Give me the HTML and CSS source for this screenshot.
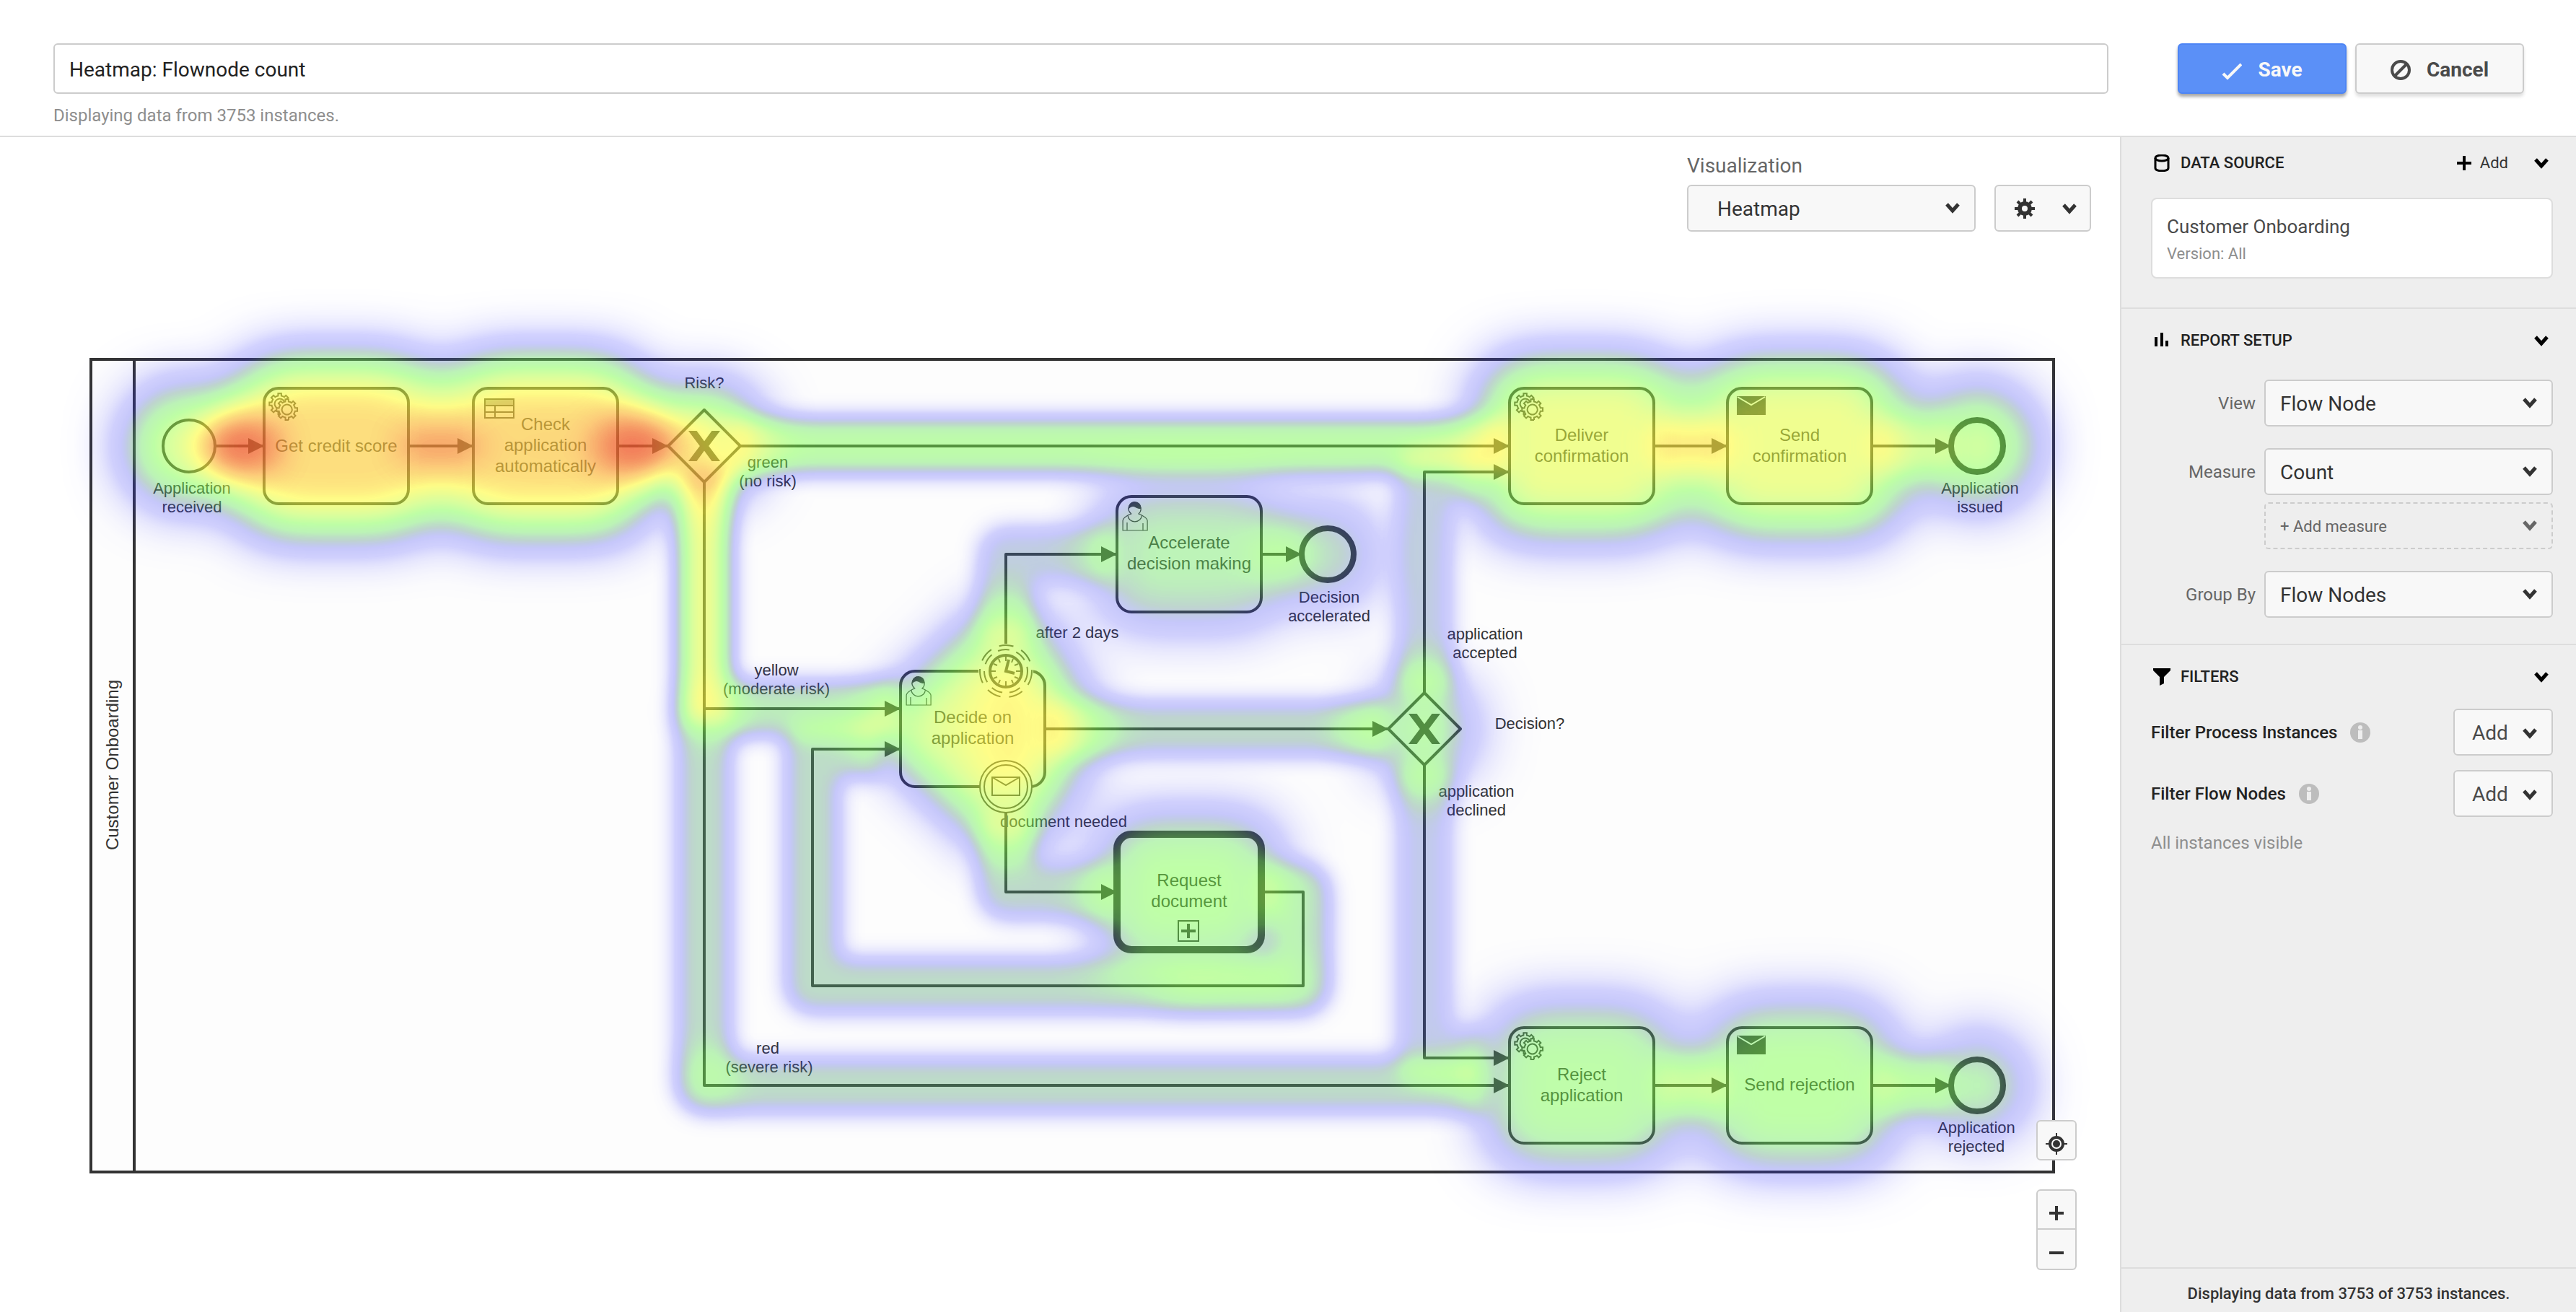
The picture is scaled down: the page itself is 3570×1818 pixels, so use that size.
FILE: index.html
```html
<!DOCTYPE html>
<html lang="en">
<head>
<meta charset="utf-8">
<title>Heatmap: Flownode count</title>
<link rel="stylesheet" href="styles.css">
</head>
<body>
<svg class="sprite" aria-hidden="true">
  <symbol id="chevron" viewBox="0 0 20 16"><path d="M2 3l8 9 8-9" fill="none" stroke="currentColor" stroke-width="5"/></symbol>
  <symbol id="info" viewBox="0 0 28 28"><circle cx="14" cy="14" r="14" fill="#bdbdbd"/><circle cx="14" cy="7" r="3" fill="#eee"/><path d="M11 11h6v12h-6z" fill="#eee"/></symbol>
</svg>

<header class="header">
  <div class="name">
    <input class="name-input" type="text" value="Heatmap: Flownode count" aria-label="Report name">
    <p class="name-info">Displaying data from 3753 instances.</p>
  </div>
  <div class="actions">
    <button class="button primary" type="button">
      <svg class="icon-action" viewBox="0 0 28 28" aria-hidden="true"><path d="M2 19l6 6L27 6" fill="none" stroke="currentColor" stroke-width="4"/></svg>Save
    </button>
    <button class="button" type="button">
      <svg class="icon-action" viewBox="0 0 28 28" aria-hidden="true"><g fill="none" stroke="currentColor" stroke-width="4"><circle cx="14" cy="14" r="12"/><path d="M6 22L22 6"/></g></svg>Cancel
    </button>
  </div>
</header>

<div class="content">
  <main class="report">
    <svg class="diagram" viewBox="0 190 2938 1628" role="img" aria-label="Customer Onboarding process heatmap">
      <defs>
        <marker id="arrow" viewBox="0 0 22 22" refX="22" refY="11" markerWidth="22" markerHeight="22" markerUnits="userSpaceOnUse" orient="auto"><path d="M0 0l22 11L0 22z" fill="#333"/></marker>
        <g id="gear">
          <circle cy="-7" cx="-1" r="5" fill="#fff"/>
          <path d="m 0,0 v -1.71335 c 0.352326,-0.0705 0.703932,-0.17838 1.047628,-0.32133 0.344416,-0.14465 0.665822,-0.32133 0.966377,-0.52145 l 1.19431,1.18005 1.567487,-1.57688 -1.195028,-1.18014 c 0.403376,-0.61394 0.683079,-1.29908 0.825447,-2.01824 l 1.622133,-0.01 v -2.2196 l -1.636514,0.01 c -0.07333,-0.35153 -0.178319,-0.70024 -0.323564,-1.04372 -0.145244,-0.34406 -0.321407,-0.6644 -0.522735,-0.96217 l 1.131035,-1.13631 -1.583305,-1.56293 -1.129598,1.13589 c -0.614052,-0.40108 -1.302883,-0.68093 -2.022633,-0.82247 l 0.0093,-1.61852 h -2.241173 l 0.0042,1.63124 c -0.353763,0.0736 -0.705369,0.17977 -1.049785,0.32371 -0.344415,0.14437 -0.665102,0.32092 -0.9635006,0.52006 l -1.1698628,-1.15823 -1.5667691,1.5792 1.1684265,1.15669 c -0.4026573,0.61283 -0.68308,1.29797 -0.8247287,2.01713 l -1.6588041,0.003 v 2.22174 l 1.6724648,-0.006 c 0.073327,0.35077 0.1797598,0.70243 0.3242851,1.04472 0.1452428,0.34448 0.3214064,0.6644 0.5227339,0.96066 l -1.1993431,1.19723 1.5840256,1.56011 1.1964668,-1.19348 c 0.6140517,0.40346 1.3028827,0.68232 2.0233517,0.82331 l 7.19e-4,1.69892 h 2.226848 z m 0.221462,-3.9957 c -1.788948,0.7502 -3.8576,-0.0928 -4.6097055,-1.87438 -0.7521065,-1.78321 0.090598,-3.84627 1.8802645,-4.59604 1.78823,-0.74936 3.856881,0.0929 4.608987,1.87437 0.752106,1.78165 -0.0906,3.84612 -1.879546,4.59605 z" fill="#fff" stroke="#333"/>
        </g>
        <g id="service"><use href="#gear" x="12" y="18"/><use href="#gear" x="17" y="22"/></g>
        <g id="user" stroke="#333" stroke-width=".6" fill="#fff">
          <path d="m 15,12 c 0.909,-0.845 1.594,-2.049 1.594,-3.385 0,-2.554 -1.805,-4.622 -4.357,-4.622 -2.552,0 -4.288,2.068 -4.288,4.622 0,1.348 0.974,2.562 1.896,3.405 -0.529,0.187 -5.669,2.097 -5.794,4.756 v 6.718 h 17 v -6.718 c 0,-2.298 -5.528,-4.595 -6.051,-4.776zm -8,6 l 0,5.5 m 11,0 l 0,-5"/>
          <path d="m 17.162,13.009 c 0,2.447 -2.158,4.431 -4.821,4.431 -2.665,0 -4.822,-1.981 -4.822,-4.431"/>
          <path fill="#333" d="m 8.1,8.2 c 0,0 2.251,-2.358 4.274,-1.177 2.024,1.181 4.221,1.537 4.124,0.965 -0.098,-0.57 -0.117,-3.791 -4.191,-4.136 -3.572,0.001 -4.208,3.67 -4.207,4.348 z"/>
        </g>
        <g id="envelope"><path d="M13 11h40v26H13z" fill="#333"/><path d="M14 12l19 11 19-11" fill="none" stroke="#fff" stroke-width="2"/></g>
        <g id="exclusive"><path d="M-50 0L0-50 50 0 0 50z" fill="#fff" stroke="#333" stroke-width="4" stroke-linejoin="round"/><path d="M-20-20h9L0-5l11-15h9L5 0l15 20h-9L0 5l-11 15h-9L-5 0z" fill="#333" stroke="#333" stroke-width="2"/></g>
        <filter id="blur-s" filterUnits="userSpaceOnUse" x="0" y="190" width="2938" height="1628"><feGaussianBlur stdDeviation="15"/></filter>
        <filter id="blur-m" filterUnits="userSpaceOnUse" x="0" y="190" width="2938" height="1628"><feGaussianBlur stdDeviation="24"/></filter>
        <filter id="blur-l" filterUnits="userSpaceOnUse" x="0" y="190" width="2938" height="1628"><feGaussianBlur stdDeviation="38"/></filter>
        <!-- intensity (alpha) to colour scale: blue, green, yellow, orange, red -->
        <filter id="heat" filterUnits="userSpaceOnUse" x="0" y="190" width="2938" height="1628" color-interpolation-filters="sRGB">
          <feColorMatrix in="SourceGraphic" values="0 0 0 1 0  0 0 0 1 0  0 0 0 1 0  0 0 0 0 1"/>
          <feComponentTransfer result="colour">
            <feFuncR type="table" tableValues=".2 .2 .2 .2 .32 .42 .49 .75 1 .98 .93"/>
            <feFuncG type="table" tableValues=".2 .2 .2 .22 .55 .9 1 1 .99 .68 .3"/>
            <feFuncB type="table" tableValues="1 1 1 .97 .5 .38 .29 .27 .22 .24 .17"/>
          </feComponentTransfer>
          <feComponentTransfer in="SourceGraphic" result="mask">
            <feFuncA type="table" tableValues="0 .1 .22 .27 .37 .45 .49 .53 .6 .7 .8"/>
          </feComponentTransfer>
          <feComposite in="colour" in2="mask" operator="in"/>
        </filter>
      </defs>

      <g fill="#fdfdfd" stroke="#333" stroke-width="4"><path d="M126 498h2720v1126H126z"/><path d="M186 498v1126"/></g>

      <g class="flow">
        <path d="M298 618H366"/><path d="M566 618H656"/><path d="M856 618H926"/>
        <path d="M1026 618H2092"/><path d="M2292 618H2394"/><path d="M2594 618H2704"/>
        <path d="M976 668V982H1248"/><path d="M976 982V1504H2092"/>
        <path d="M1394 894V768H1548"/><path d="M1748 768H1804"/>
        <path d="M1394 1126V1236H1548"/><path d="M1748 1236H1806V1366H1126V1038H1248"/>
        <path d="M1448 1010H1924"/><path d="M1974 960V654H2092"/><path d="M1974 1060V1466H2092"/>
        <path d="M2292 1504H2394"/><path d="M2594 1504H2704"/>
      </g>

      <g class="shape">
        <rect x="366" y="538" width="200" height="160" rx="20"/>
        <rect x="656" y="538" width="200" height="160" rx="20"/>
        <rect x="2092" y="538" width="200" height="160" rx="20"/>
        <rect x="2394" y="538" width="200" height="160" rx="20"/>
        <rect x="1548" y="688" width="200" height="160" rx="20"/>
        <rect x="1248" y="930" width="200" height="160" rx="20"/>
        <rect x="1548" y="1156" width="200" height="160" rx="20" stroke-width="10"/>
        <rect x="2092" y="1424" width="200" height="160" rx="20"/>
        <rect x="2394" y="1424" width="200" height="160" rx="20"/>
        <circle cx="262" cy="618" r="36"/>
        <circle class="end" cx="2740" cy="618" r="36"/>
        <circle class="end" cx="1840" cy="768" r="36"/>
        <circle class="end" cx="2740" cy="1504" r="36"/>
      </g>
      <use href="#exclusive" x="976" y="618"/>
      <use href="#exclusive" x="1974" y="1010"/>

      <use href="#service" transform="translate(366 538) scale(2)"/>
      <use href="#service" transform="translate(2092 538) scale(2)"/>
      <use href="#service" transform="translate(2092 1424) scale(2)"/>
      <use href="#user" transform="translate(1548 688) scale(2)"/>
      <use href="#user" transform="translate(1248 930) scale(2)"/>
      <use href="#envelope" x="2394" y="538"/>
      <use href="#envelope" x="2394" y="1424"/>
      <g fill="none" stroke="#333" stroke-width="2"><path d="M672 553h40v9h-40z" fill="#aaa"/><path d="M672 562h40v17h-40zM672 571h40M686 562v17"/></g>
      <g transform="translate(1394 930)" fill="#fff" stroke="#333" stroke-width="2">
        <circle r="38" stroke="none"/>
        <circle r="36" stroke-dasharray="20 12"/><circle r="30" stroke-dasharray="16 10"/>
        <circle r="22" stroke-width="4"/>
        <path d="M0-20v6M0 20v-6M-20 0h6M20 0h-6M10-17l-2 5M-10-17l2 5M10 17l-2-5M-10 17l2-5M17-10l-5 2M17 10l-5-2M-17-10l5 2M-17 10l5-2" fill="none"/>
        <path d="M4-16L0 0l12 3" fill="none" stroke-width="4"/>
      </g>
      <g transform="translate(1394 1090)" fill="#fff" stroke="#333" stroke-width="2"><circle r="36"/><circle r="30"/><path d="M-19-13h38v25h-38zM-19-13L0-2l19-11"/></g>
      <g fill="none" stroke="#333" stroke-width="2"><path d="M1633 1276h28v28h-28z"/><path d="M1647 1280v20M1637 1290h20" stroke-width="4"/></g>

      <g class="task-label">
        <text x="466" y="626">Get credit score</text>
        <text x="756" y="596">Check</text><text x="756" y="625">application</text><text x="756" y="654">automatically</text>
        <text x="2192" y="611">Deliver</text><text x="2192" y="640">confirmation</text>
        <text x="2494" y="611">Send</text><text x="2494" y="640">confirmation</text>
        <text x="1648" y="760">Accelerate</text><text x="1648" y="789">decision making</text>
        <text x="1348" y="1002">Decide on</text><text x="1348" y="1031">application</text>
        <text x="1648" y="1228">Request</text><text x="1648" y="1257">document</text>
        <text x="2192" y="1497">Reject</text><text x="2192" y="1526">application</text>
        <text x="2494" y="1511">Send rejection</text>
        <text x="-1060" y="164" transform="rotate(-90)">Customer Onboarding</text>
      </g>
      <g class="outer-label">
        <text x="976" y="538">Risk?</text>
        <text x="266" y="684">Application</text><text x="266" y="710">received</text>
        <text x="1064" y="648">green</text><text x="1064" y="674">(no risk)</text>
        <text x="1076" y="936">yellow</text><text x="1076" y="962">(moderate risk)</text>
        <text x="1493" y="884">after 2 days</text>
        <text x="1474" y="1146">document needed</text>
        <text x="1842" y="835">Decision</text><text x="1842" y="861">accelerated</text>
        <text x="2058" y="886">application</text><text x="2058" y="912">accepted</text>
        <text x="2120" y="1010">Decision?</text>
        <text x="2046" y="1104">application</text><text x="2046" y="1130">declined</text>
        <text x="2744" y="684">Application</text><text x="2744" y="710">issued</text>
        <text x="2739" y="1570">Application</text><text x="2739" y="1596">rejected</text>
        <text x="1064" y="1460">red</text><text x="1066" y="1486">(severe risk)</text>
      </g>

      <g filter="url(#heat)">
        <g filter="url(#blur-l)">
          <rect x="320" y="490" width="292" height="256" rx="70" opacity=".86"/>
          <rect x="610" y="490" width="292" height="256" rx="70" opacity=".86"/>
          <rect x="2046" y="490" width="292" height="256" rx="70" opacity=".76"/>
          <rect x="2348" y="490" width="292" height="256" rx="70" opacity=".76"/>
          <rect x="2056" y="1386" width="272" height="236" rx="70" opacity=".58"/>
          <rect x="2358" y="1386" width="272" height="236" rx="70" opacity=".6"/>
          <rect x="1516" y="668" width="264" height="204" rx="60" opacity=".5"/>
          <rect x="1520" y="1126" width="256" height="220" rx="60" opacity=".6"/>
          <path d="M1190 1010l180-170h60l100 170-100 170h-60z" opacity=".74"/>
          <circle cx="256" cy="618" r="88" opacity=".72"/>
          <circle cx="976" cy="610" r="84" opacity=".72"/>
          <circle cx="2740" cy="618" r="88" opacity=".68"/>
          <circle cx="2740" cy="1504" r="74" opacity=".56"/>
          <circle cx="1840" cy="768" r="76" opacity=".46"/>
          <circle cx="1974" cy="1010" r="80" opacity=".46"/>
        </g>
        <g filter="url(#blur-m)">
          <ellipse cx="334" cy="618" rx="60" ry="46" opacity=".95"/>
          <ellipse cx="880" cy="618" rx="62" ry="50" opacity=".95"/>
          <path d="M550 596h120v44H550z" opacity=".8"/>
          <ellipse cx="756" cy="618" rx="70" ry="40" opacity=".1"/>
          <path d="M926 576h90v84h-90z" opacity=".4"/>
          <path d="M2280 600h130v36H2280zM2586 600h50v36h-50z" opacity=".5"/>
          <path d="M2290 1474h110v60h-110zM2590 1474h110v60h-110z" opacity=".28"/>
          <ellipse cx="1400" cy="1010" rx="60" ry="90" opacity=".28"/>
          <path d="M1740 738h70v60h-70z" opacity=".3"/>
          <path d="M1740 1330h76v60h-206v-34h130z" opacity=".3"/>
          <path d="M1944 920h60v180h-60zM1850 990h70v40h-70z" opacity=".3"/>
          <circle cx="986" cy="1490" r="34" opacity=".35"/>
          <circle cx="986" cy="985" r="40" opacity=".3"/>
        </g>
        <g filter="url(#blur-s)" fill="none" stroke="#000" stroke-width="78">
          <path d="M1010 618H2092" opacity=".58"/>
          <path d="M976 640V1004" opacity=".66"/>
          <path d="M976 640V990" stroke-width="36" opacity=".36"/>
          <path d="M1014 982H1248" opacity=".48"/>
          <path d="M976 1000V1504H2060" stroke-linejoin="round" opacity=".43"/>
          <path d="M1394 894V768H1548" stroke-linejoin="round" opacity=".36"/>
          <path d="M1394 1126V1236H1548" stroke-linejoin="round" opacity=".4"/>
          <path d="M1740 1236H1806V1366H1126V1038H1220" stroke-linejoin="round" opacity=".43"/>
          <path d="M1448 1010H1924" opacity=".42"/>
          <path d="M1974 960V654H2060" stroke-linejoin="round" opacity=".36"/>
          <path d="M1974 1060V1466H2060" stroke-linejoin="round" opacity=".34"/>
          <path d="M2292 618H2394M2594 618H2704" opacity=".26"/>
          <path d="M2292 1504H2394M2594 1504H2704" opacity=".25"/>
        </g>
      </g>
    </svg>

    <div class="visualization">
      <label class="visualization-label" for="visualization">Visualization</label>
      <div class="dropdown wide"><select id="visualization"><option>Heatmap</option></select><svg class="chevron"><use href="#chevron"/></svg></div>
      <button class="settings" type="button" aria-label="Configuration">
        <svg class="icon-gear" viewBox="0 0 28 28" aria-hidden="true"><g stroke="currentColor"><circle cx="14" cy="14" r="7" fill="none" stroke-width="6"/><path d="M14 0v5M14 23v5M0 14h5M23 14h5M4 4l4 4M20 20l4 4M24 4l-4 4M4 24l4-4" stroke-width="4"/></g></svg>
        <svg class="chevron"><use href="#chevron"/></svg>
      </button>
    </div>

    <div class="zoom-controls">
      <button class="zoom-button reset" type="button" aria-label="Reset view"><svg viewBox="0 0 30 30" aria-hidden="true"><circle cx="15" cy="15" r="9" fill="none" stroke="currentColor" stroke-width="4"/><circle cx="15" cy="15" r="5" fill="currentColor"/><path d="M15 0v6M15 24v6M0 15h6M24 15h6" stroke="currentColor" stroke-width="2"/></svg></button>
      <button class="zoom-button zoom-in" type="button" aria-label="Zoom in"><svg viewBox="0 0 30 30" aria-hidden="true"><path d="M15 5v20M5 15h20" stroke="currentColor" stroke-width="4"/></svg></button>
      <button class="zoom-button zoom-out" type="button" aria-label="Zoom out"><svg viewBox="0 0 30 30" aria-hidden="true"><path d="M5 15h20" stroke="currentColor" stroke-width="4"/></svg></button>
    </div>
  </main>

  <aside class="sidebar">
    <section class="section source">
      <div class="section-head">
        <svg class="icon-head" viewBox="0 0 24 24" aria-hidden="true"><g fill="none" stroke="currentColor" stroke-width="3"><ellipse cx="12" cy="5" rx="9" ry="4"/><path d="M3 5v14c0 5 18 5 18 0V5"/></g></svg>
        <h2>DATA SOURCE</h2>
        <button class="add-source" type="button"><svg class="icon-plus" viewBox="0 0 20 20" aria-hidden="true"><path d="M10 0v20M0 10h20" stroke="currentColor" stroke-width="4"/></svg>Add</button>
        <button class="toggle" type="button" aria-label="Collapse data source"><svg class="chevron"><use href="#chevron"/></svg></button>
      </div>
      <div class="card"><p class="card-title">Customer Onboarding</p><p class="card-version">Version: All</p></div>
    </section>

    <section class="section">
      <div class="section-head">
        <svg class="icon-head" viewBox="0 0 24 24" aria-hidden="true"><path d="M2 7h4v13H2zM10 1h4v19h-4zM17 12h4v8h-4z" fill="currentColor"/></svg>
        <h2>REPORT SETUP</h2>
        <button class="toggle" type="button" aria-label="Collapse report setup"><svg class="chevron"><use href="#chevron"/></svg></button>
      </div>
      <div class="setup">
        <div class="field"><label for="view">View</label>
          <div class="dropdown"><select id="view"><option>Flow Node</option></select><svg class="chevron"><use href="#chevron"/></svg></div></div>
        <div class="field"><label for="measure">Measure</label>
          <div class="dropdown"><select id="measure"><option>Count</option></select><svg class="chevron"><use href="#chevron"/></svg></div>
          <div class="dropdown dashed"><select aria-label="Add measure"><option>+ Add measure</option></select><svg class="chevron"><use href="#chevron"/></svg></div></div>
        <div class="field"><label for="group">Group By</label>
          <div class="dropdown"><select id="group"><option>Flow Nodes</option></select><svg class="chevron"><use href="#chevron"/></svg></div></div>
      </div>
    </section>

    <section class="section filters">
      <div class="section-head">
        <svg class="icon-head" viewBox="0 0 24 24" aria-hidden="true"><path d="M0 0h24v3l-9 9v9l-6 3V12L0 3z" fill="currentColor"/></svg>
        <h2>FILTERS</h2>
        <button class="toggle" type="button" aria-label="Collapse filters"><svg class="chevron"><use href="#chevron"/></svg></button>
      </div>
      <div class="filter-list">
        <div class="filter"><h3>Filter Process Instances</h3><svg class="icon-info" aria-hidden="true"><use href="#info"/></svg><button class="filter-add" type="button">Add<svg class="chevron"><use href="#chevron"/></svg></button></div>
        <div class="filter"><h3>Filter Flow Nodes</h3><svg class="icon-info" aria-hidden="true"><use href="#info"/></svg><button class="filter-add" type="button">Add<svg class="chevron"><use href="#chevron"/></svg></button></div>
      </div>
      <p class="filter-note">All instances visible</p>
    </section>

    <footer class="footer">Displaying data from 3753 of 3753 instances.</footer>
  </aside>
</div>
</body>
</html>
```
FILE: styles.css
```css
* { box-sizing: border-box; }
body {
  margin: 0;
  min-height: 100vh;
  display: flex;
  flex-direction: column;
  background: #fff;
  color: #222;
  font: 28px/32px Roboto, "Liberation Sans", sans-serif;
}
h2, h3, p { margin: 0; }
button, input, select { font: inherit; color: inherit; }
button { cursor: pointer; padding: 0; }
.sprite { position: absolute; width: 0; height: 0; }

/* header */
.header {
  display: flex;
  gap: 96px;
  padding: 60px 72px 14px 74px;
  border-bottom: 2px solid #ddd;
}
.name { flex: 1; }
.name-input {
  display: block;
  width: 100%;
  height: 70px;
  padding: 2px 20px 0;
  border: 2px solid #ccc;
  border-radius: 6px;
  background: #fff;
}
.name-info { margin-top: 16px; font-size: 24px; line-height: 28px; color: #8e8e8e; }
.actions { display: flex; align-items: flex-start; gap: 12px; }
.button {
  display: flex;
  align-items: center;
  justify-content: center;
  gap: 22px;
  width: 234px;
  height: 70px;
  padding-top: 4px;
  border: 2px solid #ccc;
  border-radius: 6px;
  background: #f8f8f8;
  box-shadow: 0 4px 4px rgba(0, 0, 0, .12);
  color: #4a4a4a;
  font-weight: 700;
}
.button.primary {
  border-color: #4d85f5;
  background: #5b90f7;
  box-shadow: 0 4px 4px rgba(0, 0, 0, .35);
  color: #f8f8f8;
}
.icon-action { width: 28px; height: 28px; }

.content { flex: 1; display: flex; }

/* report */
.report { position: relative; flex: 1; min-width: 0; padding: 24px 40px 0 0; }
.diagram { position: absolute; inset: 0; width: 100%; height: 100%; }
.flow path { fill: none; stroke: #333; stroke-width: 4; stroke-linejoin: round; marker-end: url(#arrow); }
.shape { fill: #fff; stroke: #333; stroke-width: 4; }
.shape .end { stroke-width: 8; }
.task-label, .outer-label { font-family: "Liberation Sans", Arial, sans-serif; fill: #333; text-anchor: middle; }
.task-label { font-size: 24px; }
.outer-label { font-size: 22px; }

.visualization {
  position: relative;
  display: grid;
  grid-template-columns: 400px 134px;
  justify-content: end;
  column-gap: 26px;
  row-gap: 10px;
}
.visualization-label { grid-column: 1 / -1; color: #666; }

.chevron { display: block; width: 20px; height: 16px; }
.dropdown { position: relative; color: #333; }
.dropdown select {
  display: block;
  width: 100%;
  height: 65px;
  padding: 2px 60px 0 20px;
  border: 2px solid #ccc;
  border-radius: 6px;
  background: #f8f8f8;
  appearance: none;
}
.dropdown .chevron { position: absolute; right: 22px; top: 24px; pointer-events: none; }
.dropdown.wide select { padding-left: 40px; }
.dropdown.dashed { color: #666; }
.dropdown.dashed select { border-style: dashed; background: transparent; font-size: 22px; }
.settings {
  display: flex;
  align-items: center;
  justify-content: space-between;
  height: 65px;
  padding: 0 18px 0 26px;
  border: 2px solid #ccc;
  border-radius: 6px;
  background: #f8f8f8;
  color: #333;
}
.icon-gear { width: 28px; height: 28px; }

.zoom-controls { position: absolute; right: 60px; bottom: 58px; }
.zoom-button {
  display: flex;
  align-items: center;
  justify-content: center;
  width: 56px;
  height: 56px;
  padding-top: 10px;
  border: 2px solid #ccc;
  border-radius: 6px;
  background: #f8f8f8;
  color: #333;
}
.zoom-button svg { width: 30px; height: 30px; }
.zoom-button.reset { margin-bottom: 40px; }
.zoom-button.zoom-in { border-radius: 6px 6px 0 0; }
.zoom-button.zoom-out { border-top: 0; border-radius: 0 0 6px 6px; }

/* sidebar */
.sidebar {
  display: flex;
  flex-direction: column;
  width: 632px;
  border-left: 2px solid #ddd;
  background: #eee;
}
.section { padding: 28px 32px 36px 41px; border-bottom: 2px solid #ddd; }
.section.source { padding-top: 20px; padding-bottom: 40px; }
.section.filters { border-bottom: 0; }
.section-head { display: flex; align-items: center; height: 32px; color: #000; }
.icon-head { width: 24px; height: 24px; margin: 0 14px 0 3px; }
h2 { flex: 1; color: #222; font-size: 22px; font-weight: 500; }
.add-source {
  display: flex;
  align-items: center;
  gap: 12px;
  margin-right: 36px;
  border: 0;
  background: none;
  color: #333;
  font-size: 22px;
}
.icon-plus { width: 20px; height: 20px; color: #000; }
.toggle { margin-right: 6px; border: 0; background: none; color: #000; }
.card {
  height: 112px;
  margin-top: 32px;
  padding: 22px 20px;
  border: 2px solid #ddd;
  border-radius: 8px;
  background: #fff;
}
.card-title { font-size: 26px; color: #4a4a4a; }
.card-version { margin-top: 8px; font-size: 22px; line-height: 28px; color: #8e8e8e; }

.setup { display: flex; flex-direction: column; gap: 30px; margin-top: 38px; }
.field { display: grid; grid-template-columns: 1fr 400px; column-gap: 12px; row-gap: 10px; align-items: center; }
.field label { text-align: right; font-size: 24px; color: #666; }
.dropdown.dashed { grid-column: 2; }

.filter-list { display: flex; flex-direction: column; gap: 20px; margin-top: 28px; }
.filter { display: flex; align-items: center; }
h3 { font-size: 24px; font-weight: 500; }
.icon-info { width: 28px; height: 28px; margin-left: 18px; }
.filter-add {
  display: flex;
  align-items: center;
  justify-content: space-between;
  width: 138px;
  height: 65px;
  margin-left: auto;
  padding: 2px 20px 0 24px;
  border: 2px solid #ccc;
  border-radius: 6px;
  background: #f8f8f8;
  color: #4a4a4a;
}
.filter-add .chevron { color: #333; }
.filter-note { margin-top: 20px; font-size: 24px; color: #8e8e8e; }
.footer {
  margin-top: auto;
  padding: 24px 20px 14px;
  border-top: 2px solid #ddd;
  color: #333;
  font-size: 22px;
  line-height: 22px;
  font-weight: 500;
  text-align: center;
}
```
